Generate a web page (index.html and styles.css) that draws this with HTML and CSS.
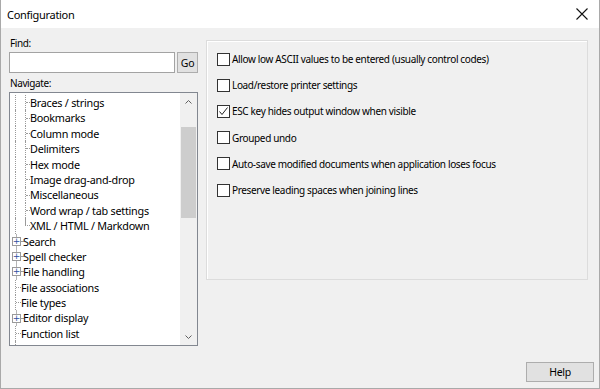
FILE: index.html
```html
<!DOCTYPE html>
<html>
<head>
<meta charset="utf-8">
<link rel="stylesheet" href="styles.css">
</head>
<body>
<div class="window">
  <div class="titlebar">
    <span class="title">Configuration</span>
    <svg class="close" width="12" height="12" viewBox="0 0 12 12"><path d="M0.5 0.5 L11.5 11.5 M11.5 0.5 L0.5 11.5" stroke="#111" stroke-width="1.1" fill="none"/></svg>
  </div>
  <div class="content">
    <div class="leftcol">
      <div class="label">Find:</div>
      <div class="findrow">
        <div class="input"></div>
        <div class="btn go">Go</div>
      </div>
      <div class="label nav">Navigate:</div>
      <div class="tree">
        <div class="items">
          <div class="row"><span class="i5"></span><span class="vl w10"></span><span class="vl tk"><i></i></span><span class="t">Braces / strings</span></div>
          <div class="row"><span class="i5"></span><span class="vl w10"></span><span class="vl tk"><i></i></span><span class="t">Bookmarks</span></div>
          <div class="row"><span class="i5"></span><span class="vl w10"></span><span class="vl tk"><i></i></span><span class="t">Column mode</span></div>
          <div class="row"><span class="i5"></span><span class="vl w10"></span><span class="vl tk"><i></i></span><span class="t">Delimiters</span></div>
          <div class="row"><span class="i5"></span><span class="vl w10"></span><span class="vl tk"><i></i></span><span class="t">Hex mode</span></div>
          <div class="row"><span class="i5"></span><span class="vl w10"></span><span class="vl tk"><i></i></span><span class="t">Image drag-and-drop</span></div>
          <div class="row"><span class="i5"></span><span class="vl w10"></span><span class="vl tk"><i></i></span><span class="t">Miscellaneous</span></div>
          <div class="row"><span class="i5"></span><span class="vl w10"></span><span class="vl tk"><i></i></span><span class="t">Word wrap / tab settings</span></div>
          <div class="row"><span class="i5"></span><span class="vl w10"></span><span class="hl tk"><i></i></span><span class="t">XML / HTML / Markdown</span></div>
          <div class="row"><span class="i2"></span><span class="bx"><b>+</b></span><span class="tk2"><i></i></span><span class="t">Search</span></div>
          <div class="row"><span class="i2"></span><span class="bx"><b>+</b></span><span class="tk2"><i></i></span><span class="t">Spell checker</span></div>
          <div class="row"><span class="i2"></span><span class="bx"><b>+</b></span><span class="tk2"><i></i></span><span class="t">File handling</span></div>
          <div class="row"><span class="i5"></span><span class="vl tk6"><i></i></span><span class="t">File associations</span></div>
          <div class="row"><span class="i5"></span><span class="vl tk6"><i></i></span><span class="t">File types</span></div>
          <div class="row"><span class="i2"></span><span class="bx"><b>+</b></span><span class="tk2"><i></i></span><span class="t">Editor display</span></div>
          <div class="row"><span class="i5"></span><span class="vl tk6"><i></i></span><span class="t">Function list</span></div>
          <div class="row"><span class="i5"></span><span class="vl tk6"><i></i></span><span class="t">Printing options</span></div>
        </div>
        <div class="scrollbar">
          <div class="arrow"><svg width="7" height="4" viewBox="0 0 7 4"><path d="M0.5 3.5 L3.5 0.5 L6.5 3.5" stroke="#606060" fill="none"/></svg></div>
          <div class="track"><div class="thumb"></div></div>
          <div class="arrow"><svg width="7" height="4" viewBox="0 0 7 4"><path d="M0.5 0.5 L3.5 3.5 L6.5 0.5" stroke="#606060" fill="none"/></svg></div>
        </div>
      </div>
    </div>
    <div class="panel">
      <div class="opt"><span class="cb"></span><span>Allow low ASCII values to be entered (usually control codes)</span></div>
      <div class="opt"><span class="cb"></span><span>Load/restore printer settings</span></div>
      <div class="opt"><span class="cb"><svg width="11" height="11" viewBox="0 0 11 11"><path d="M1.5 5.5 L4 8.5 L9.5 1.5" stroke="#222" stroke-width="1" fill="none"/></svg></span><span>ESC key hides output window when visible</span></div>
      <div class="opt"><span class="cb"></span><span>Grouped undo</span></div>
      <div class="opt"><span class="cb"></span><span>Auto-save modified documents when application loses focus</span></div>
      <div class="opt"><span class="cb"></span><span>Preserve leading spaces when joining lines</span></div>
    </div>
  </div>
  <div class="footer">
    <div class="btn help">Help</div>
  </div>
</div>
</body>
</html>
```
FILE: styles.css
```css
html, body {
  margin: 0;
  padding: 0;
  background: #ffffff;
}
body {
  font-family: "Noto Sans", "Open Sans", sans-serif;
  font-size: 11px;
  color: #000;
}
.window {
  width: 600px;
  height: 389px;
  box-sizing: border-box;
  border: 1px solid #a9a9a9;
  border-top: none;
  background: #f0f0f0;
  display: flex;
  flex-direction: column;
}
.titlebar {
  height: 28px;
  background: #ffffff;
  display: flex;
  align-items: center;
  justify-content: space-between;
  padding: 0 10px 0 6px;
  flex: none;
}
.title {
  font-size: 11px;
  letter-spacing: -0.3px;
  padding-top: 1px;
}
.close {
  margin-right: 1px;
}
.content {
  display: flex;
  height: 318px;
  padding: 0 0 0 8px;
  flex: none;
}
.leftcol {
  width: 189px;
  display: flex;
  flex-direction: column;
  padding-top: 7px;
}
.label {
  height: 17px;
  line-height: 17px;
  font-size: 10px;
  letter-spacing: -0.4px;
  padding-left: 1px;
}
.findrow {
  display: flex;
  gap: 2px;
  height: 20px;
}
.input {
  width: 166px;
  box-sizing: border-box;
  height: 21px;
  background: #fff;
  border: 1px solid #a3a3a3;
}
.btn {
  box-sizing: border-box;
  background: #e1e1e1;
  border: 1px solid #adadad;
  display: flex;
  align-items: center;
  justify-content: center;
  font-size: 10.5px;
  letter-spacing: -0.3px;
}
.go {
  width: 21px;
  height: 21px;
}
.nav {
  margin-top: 3px;
  margin-bottom: 0;
}
.tree {
  height: 254px;
  width: 189px;
  box-sizing: border-box;
  border: 1px solid #828790;
  background: #fff;
  display: flex;
  overflow: hidden;
}
.items {
  flex: 1;
  padding-top: 2px;
  overflow: hidden;
}
.row {
  display: flex;
  height: 15.4px;
  align-items: stretch;
  white-space: nowrap;
}
.row .t {
  line-height: 15.4px;
  font-size: 10.8px;
  letter-spacing: -0.25px;
}
.i5 { width: 5px; flex: none; }
.i2 { width: 2px; flex: none; }
.vl {
  border-left: 1px dotted #9a9a9a;
  box-sizing: border-box;
  flex: none;
}
.w10 { width: 10px; }
.tk, .tk6, .tk2 {
  display: flex;
  align-items: center;
  box-sizing: border-box;
  flex: none;
}
.tk { width: 5px; }
.tk6 { width: 6px; }
.tk2 { width: 2px; }
.tk i, .tk6 i, .tk2 i {
  display: block;
  width: 100%;
  border-top: 1px dotted #9a9a9a;
}
.hl {
  background: linear-gradient(#9a9a9a, #9a9a9a) no-repeat 0 0 / 1px 50%;
}
.bx {
  width: 9px;
  flex: none;
  display: flex;
  align-items: center;
  background: linear-gradient(#b5b5b5, #b5b5b5) no-repeat 4px 0 / 1px 100%;
}
.bx b {
  display: flex;
  width: 9px;
  height: 9px;
  box-sizing: border-box;
  border: 1px solid #9a9a9a;
  background: #fff;
  font-weight: normal;
  font-size: 9px;
  line-height: 7px;
  color: #3050a0;
  align-items: center;
  justify-content: center;
  font-family: "DejaVu Sans", sans-serif;
}
.scrollbar {
  width: 17px;
  flex: none;
  background: #f0f0f0;
  display: flex;
  flex-direction: column;
}
.arrow {
  height: 17px;
  display: flex;
  align-items: center;
  justify-content: center;
  flex: none;
}
.track {
  flex: 1;
  padding-top: 17px;
}
.thumb {
  height: 91px;
  margin: 0 1px;
  background: #cdcdcd;
}
.panel {
  margin-left: 8px;
  margin-top: 12px;
  width: 382px;
  height: 240px;
  box-sizing: border-box;
  border: 1px solid #dcdcdc;
  box-shadow: inset 1px 1px 0 #ffffff;
  padding: 5px 0 0 10px;
  font-size: 10px;
  letter-spacing: -0.35px;
}
.opt {
  height: 26.2px;
  display: flex;
  align-items: center;
  gap: 2px;
  white-space: nowrap;
}
.cb {
  width: 13px;
  height: 13px;
  box-sizing: border-box;
  border: 1px solid #333;
  background: #fff;
  flex: none;
  display: flex;
  align-items: center;
  justify-content: center;
}
.footer {
  display: flex;
  justify-content: flex-end;
  padding: 16px 5px 0 0;
}
.help {
  width: 68px;
  height: 20px;
}
```
